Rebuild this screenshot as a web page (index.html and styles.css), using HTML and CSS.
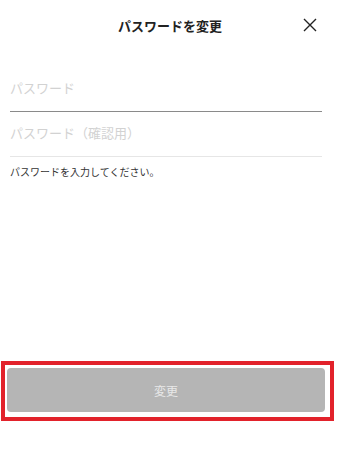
FILE: index.html
```html
<!doctype html>
<html lang="ja">
    <head>
        <meta charset="UTF-8" />
        <meta name="viewport" content="width=device-width, initial-scale=1.0" />
        <title>パスワードを変更</title>
        <link rel="stylesheet" href="styles.css">
    </head>
    <body>
        <div class="page">
            <header class="header">
                <span></span>
                <h1 class="title">パスワードを変更</h1>
                <button class="close" aria-label="閉じる">
                    <svg width="14" height="14" viewBox="0 0 14 14">
                        <path d="M1 1 L13 13 M13 1 L1 13" stroke="#222" stroke-width="1.4" fill="none" />
                    </svg>
                </button>
            </header>
            <form class="form">
                <input class="field active" type="password" placeholder="パスワード" />
                <input class="field" type="password" placeholder="パスワード（確認用）" />
                <p class="hint">パスワードを入力してください。</p>
            </form>
            <div class="footer">
                <button class="submit" disabled>変更</button>
            </div>
        </div>
    </body>
</html>
```

FILE: styles.css
```css
body {
    margin: 0;
    background: #fff;
    font-family: "Noto Sans CJK JP", "Noto Sans", sans-serif;
    color: #222;
}
.page {
    width: 340px;
    height: 456px;
    display: flex;
    flex-direction: column;
}
.header {
    height: 50px;
    display: grid;
    grid-template-columns: 1fr auto 1fr;
    align-items: center;
}
.title {
    margin: 0;
    font-size: 13px;
    font-weight: bold;
    line-height: 18px;
    padding-top: 2px;
}
.close {
    justify-self: end;
    margin-right: 23px;
    padding: 0;
    border: none;
    background: none;
    width: 14px;
    height: 14px;
    display: flex;
}
.form {
    display: flex;
    flex-direction: column;
    padding: 17px 18px 0 10px;
}
.field {
    height: 45px;
    box-sizing: border-box;
    padding: 0 0 4px 0;
    border: none;
    border-bottom: 1px solid #e6e6e6;
    font-family: inherit;
    font-size: 13px;
    outline: none;
}
.field.active {
    border-bottom-color: #8a8a8a;
}
.field::placeholder {
    color: #d2d2d2;
}
.hint {
    margin: 8px 0 0;
    font-size: 10px;
    line-height: 14px;
    color: #333;
}
.footer {
    margin: auto 6px 35px 1px;
    border: 4px solid #e2222b;
    padding: 3px 5px 5px 2px;
}
.submit {
    width: 100%;
    height: 44px;
    border: none;
    border-radius: 4px;
    background: #b5b5b5;
    color: #e8e8e8;
    font-family: inherit;
    font-size: 12px;
}
```
